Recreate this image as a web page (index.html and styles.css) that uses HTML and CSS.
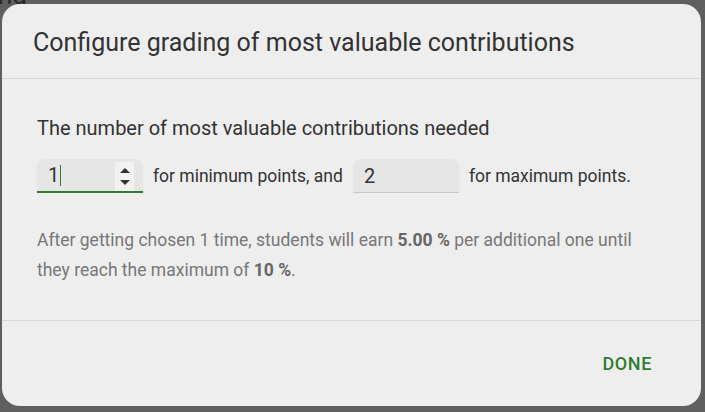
FILE: index.html
```html
<!DOCTYPE html>
<html lang="en">

<head>
  <meta charset="UTF-8">
  <meta name="viewport" content="width=device-width, initial-scale=1.0">
  <title>Configure grading</title>
  <link rel="stylesheet" href="styles.css">
</head>

<body>

  <div class="backdrop-text">ng</div>

  <div class="dialog">
    <div class="dialog-header">
      <h2>Configure grading of most valuable contributions</h2>
    </div>

    <div class="dialog-content">
      <p class="label">The number of most valuable contributions needed</p>

      <div class="field-row">
        <div class="field focused">
          <span class="value">1</span><span class="caret"></span>
          <div class="spinner">
            <span class="arrow up"></span>
            <span class="arrow down"></span>
          </div>
        </div>
        <span class="field-text">for minimum points, and</span>
        <div class="field">
          <span class="value">2</span>
        </div>
        <span class="field-text">for maximum points.</span>
      </div>

      <p class="hint">
        After getting chosen 1 time, students will earn <b>5.00 %</b> per additional one until<br>
        they reach the maximum of <b>10 %</b>.
      </p>
    </div>

    <div class="dialog-actions">
      <button class="done">Done</button>
    </div>
  </div>

</body>

</html>
```

FILE: styles.css
```css
body {
  margin: 0;
  height: 412px;
  background-color: #5f5f5f;
  font-family: Roboto, "Liberation Sans", sans-serif;
  overflow: hidden;
  position: relative;
}

.backdrop-text {
  position: absolute;
  top: -20px;
  left: -2px;
  font-size: 26px;
  color: #2a2a2a;
}

.dialog {
  position: relative;
  margin: 4px 0 0 2px;
  width: 699px;
  height: 402px;
  background-color: #eeeeee;
  border-radius: 18px;
  display: flex;
  flex-direction: column;
}

.dialog-header {
  height: 75px;
  border-bottom: 1px solid #d8d8d8;
  box-sizing: border-box;
  padding: 24px 31px 0;
}

.dialog-header h2 {
  margin: 0;
  font-size: 25px;
  font-weight: 400;
  color: #333333;
}

.dialog-content {
  flex: 1;
  padding: 37px 35px 0;
  border-bottom: 1px solid #d8d8d8;
}

.label {
  margin: 0;
  font-size: 20px;
  color: #333333;
}

.field-row {
  display: flex;
  align-items: center;
  margin-top: 19px;
}

.field {
  position: relative;
  flex-shrink: 0;
  width: 106px;
  height: 34px;
  background-color: #e6e6e6;
  border-radius: 8px 8px 0 0;
  border-bottom: 1px solid #c8c8c8;
  display: flex;
  align-items: center;
  padding-left: 11px;
  box-sizing: border-box;
  font-size: 20px;
  color: #333333;
}

.field.focused {
  border-bottom: 2px solid #2e7d32;
}

.caret {
  width: 1px;
  height: 21px;
  margin-left: 1px;
  background-color: #2e7d32;
}

.spinner {
  margin-left: auto;
  margin-right: 9px;
  width: 19px;
  height: 29px;
  background-color: #f2f2f2;
  display: flex;
  flex-direction: column;
  align-items: center;
  justify-content: center;
  gap: 7px;
  align-self: flex-end;
}

.arrow {
  width: 0;
  height: 0;
  border-left: 5px solid transparent;
  border-right: 5px solid transparent;
}

.arrow.up {
  border-bottom: 5px solid #333333;
}

.arrow.down {
  border-top: 5px solid #333333;
}

.field-text {
  font-size: 17.5px;
  color: #333333;
  margin: 0 10px;
  white-space: nowrap;
}

.hint {
  margin: 32px 0 0;
  font-size: 17.5px;
  line-height: 30px;
  color: #777777;
}

.hint b {
  color: #666666;
}

.dialog-actions {
  height: 85px;
  display: flex;
  align-items: center;
  justify-content: flex-end;
  padding-right: 41px;
}

.done {
  background: none;
  border: none;
  font-family: Roboto, "Liberation Sans", sans-serif;
  font-size: 18px;
  font-weight: 500;
  text-transform: uppercase;
  letter-spacing: 0.6px;
  color: #2e7d32;
  padding: 8px 8px;
  cursor: pointer;
}
```
